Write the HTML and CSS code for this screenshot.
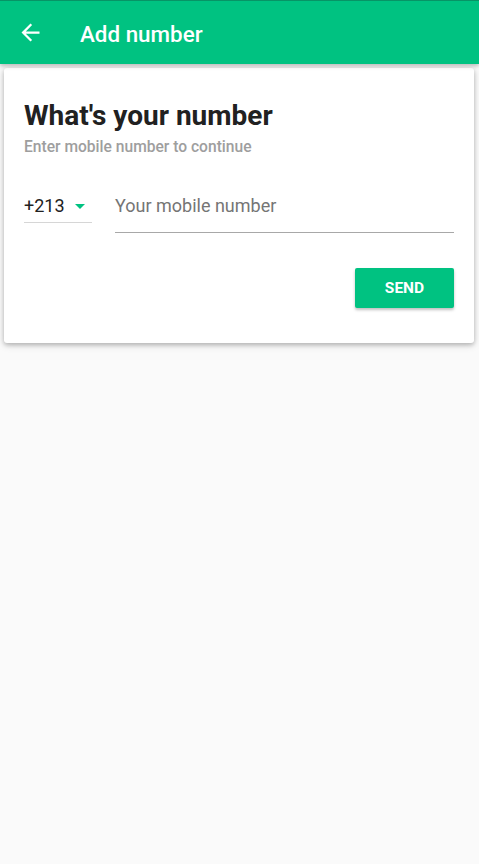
FILE: index.html
```html
<!DOCTYPE html>
<html>
<head>
<meta charset="utf-8">
<link rel="stylesheet" href="styles.css">
</head>
<body>
<header class="appbar">
  <svg class="back" width="27" height="27" viewBox="0 0 24 24"><path d="M20 11H7.83l5.59-5.59L12 4l-8 8 8 8 1.41-1.41L7.83 13H20v-2z" fill="#fff"/></svg>
  <h1 class="title">Add number</h1>
</header>
<main class="card">
  <h2 class="heading">What's your number</h2>
  <p class="sub">Enter mobile number to continue</p>
  <div class="fields">
    <div class="country">
      <span class="code">+213</span>
      <span class="caret"></span>
    </div>
    <div class="phone">Your mobile number</div>
  </div>
  <div class="actions">
    <button class="send">SEND</button>
  </div>
</main>
</body>
</html>
```

FILE: styles.css
```css
* { box-sizing: border-box; }
html, body { margin: 0; padding: 0; }
body {
  background: #fafafa;
  font-family: Roboto, "Noto Sans", sans-serif;
  width: 479px;
  height: 864px;
  overflow: hidden;
}
.appbar {
  height: 64px;
  background: #00c281;
  border-top: 1px solid #079466;
  display: flex;
  align-items: center;
  padding-left: 17px;
  box-shadow: 0 2px 4px rgba(0,0,0,0.25);
  position: relative;
  z-index: 1;
}
.back { display: block; }
.title {
  margin: 2px 0 0 36px;
  color: #fff;
  font-size: 22.4px;
  font-weight: 500;
  line-height: 26px;
}
.card {
  margin: 4px 5px 0 4px;
  background: #fff;
  border-radius: 3px;
  box-shadow: 0 2px 4px rgba(0,0,0,0.2), 0 2px 8px rgba(0,0,0,0.14);
  padding: 32px 20px 35px 20px;
}
.heading {
  margin: 0;
  font-size: 28px;
  font-weight: 700;
  color: #212121;
  line-height: 32px;
}
.sub {
  margin: 6px 0 0 0;
  font-size: 15.6px;
  font-weight: 500;
  color: #9e9e9e;
  line-height: 18px;
}
.fields {
  display: flex;
  align-items: flex-start;
  margin-top: 38px;
}
.country {
  width: 68px;
  height: 29px;
  display: flex;
  align-items: flex-start;
  border-bottom: 1px solid #d6d6d6;
}
.code {
  font-size: 18px;
  line-height: 24px;
  color: #212121;
}
.caret {
  margin: 10px 0 0 10px;
  width: 0; height: 0;
  border-left: 5px solid transparent;
  border-right: 5px solid transparent;
  border-top: 5px solid #00c281;
}
.phone {
  margin-left: 23px;
  flex: 1;
  height: 39px;
  border-bottom: 1px solid #a8a8a8;
  font-size: 18px;
  line-height: 24px;
  color: #757575;
}
.actions {
  display: flex;
  justify-content: flex-end;
  margin-top: 35px;
}
.send {
  display: block;
  width: 99px;
  height: 40px;
  border: none;
  border-radius: 2px;
  background: #00c281;
  color: #fff;
  font-family: Roboto, sans-serif;
  font-weight: 700;
  font-size: 15.5px;
  box-shadow: 0 2px 3px rgba(0,0,0,0.25);
  padding: 0;
}
```
